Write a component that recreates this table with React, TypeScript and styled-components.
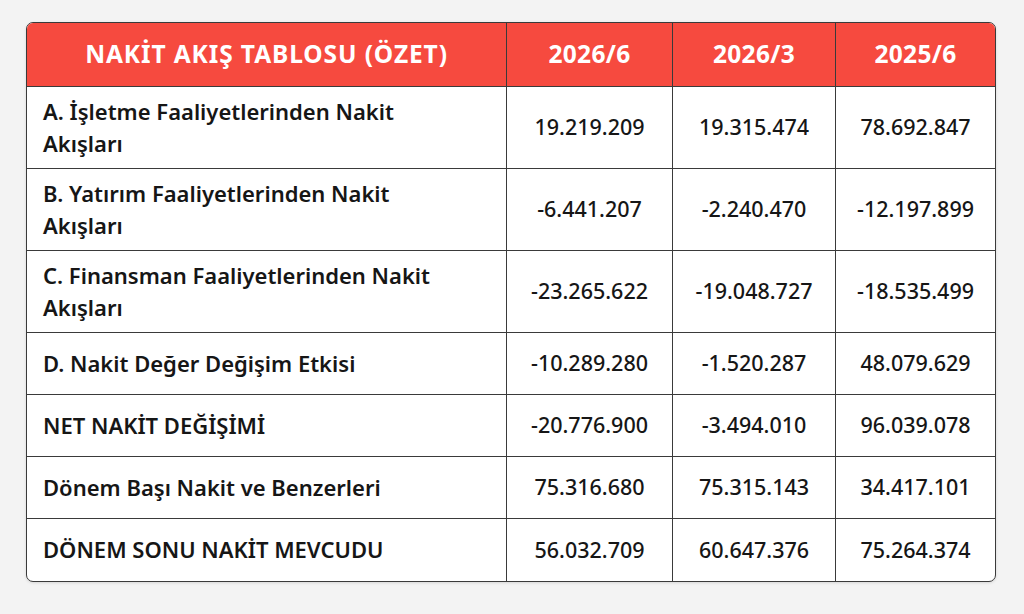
import React from 'react'
import styled, { createGlobalStyle } from 'styled-components'

const GlobalStyle = createGlobalStyle`
    html, body {
        margin: 0;
        padding: 0;
        background: #f3f3f3;
        font-family: 'Noto Sans', 'Open Sans', sans-serif;
    }
`

const Page = styled.div({
    padding: '22px 0 0 26px',
    height: '614px',
    boxSizing: 'border-box',
})

const Table = styled.table`
    width: 970px;
    border-collapse: separate;
    border-spacing: 0;
    border: 1px solid #3a3a3a;
    border-radius: 7px;
    overflow: hidden;
    background: #ffffff;
    table-layout: fixed;
    box-shadow: 0 1px 3px rgba(0, 0, 0, 0.12);
`

const HeadCell = styled.th<{ first?: boolean }>`
    height: 61px;
    padding: 0 0 2px 0;
    background: #f64a3f;
    color: #ffffff;
    font-size: 24.5px;
    font-weight: 700;
    text-align: center;
    letter-spacing: ${(p) => (p.first ? '0.9px' : '0.3px')};
    border-left: ${(p) => (p.first ? 'none' : '1px solid #3a3a3a')};
    border-bottom: 1px solid #3a3a3a;
`

const Row = styled.tr<{ tall?: boolean }>`
    height: ${(p) => (p.tall ? '82px' : '62px')};
`

const LabelCell = styled.td<{ last?: boolean }>`
    padding: 0 60px 2px 16px;
    font-size: 22px;
    font-weight: 600;
    line-height: 32px;
    color: #161616;
    border-bottom: ${(p) => (p.last ? 'none' : '1px solid #3a3a3a')};
`

const ValueCell = styled.td<{ last?: boolean }>`
    padding: 0 0 2px 0;
    text-align: center;
    font-size: 21.5px;
    font-weight: 500;
    color: #161616;
    border-left: 1px solid #3a3a3a;
    border-bottom: ${(p) => (p.last ? 'none' : '1px solid #3a3a3a')};
`

const rows = [
    { label: 'A. İşletme Faaliyetlerinden Nakit Akışları', values: ['19.219.209', '19.315.474', '78.692.847'], tall: true },
    { label: 'B. Yatırım Faaliyetlerinden Nakit Akışları', values: ['-6.441.207', '-2.240.470', '-12.197.899'], tall: true },
    { label: 'C. Finansman Faaliyetlerinden Nakit Akışları', values: ['-23.265.622', '-19.048.727', '-18.535.499'], tall: true },
    { label: 'D. Nakit Değer Değişim Etkisi', values: ['-10.289.280', '-1.520.287', '48.079.629'] },
    { label: 'NET NAKİT DEĞİŞİMİ', values: ['-20.776.900', '-3.494.010', '96.039.078'] },
    { label: 'Dönem Başı Nakit ve Benzerleri', values: ['75.316.680', '75.315.143', '34.417.101'] },
    { label: 'DÖNEM SONU NAKİT MEVCUDU', values: ['56.032.709', '60.647.376', '75.264.374'] },
]

export default function App() {
    return (
        <Page>
            <GlobalStyle />
            <Table>
                <colgroup>
                    <col style={{ width: 479 }} />
                    <col style={{ width: 166 }} />
                    <col style={{ width: 163 }} />
                    <col />
                </colgroup>
                <thead>
                    <tr>
                        <HeadCell first>NAKİT AKIŞ TABLOSU (ÖZET)</HeadCell>
                        <HeadCell>2026/6</HeadCell>
                        <HeadCell>2026/3</HeadCell>
                        <HeadCell>2025/6</HeadCell>
                    </tr>
                </thead>
                <tbody>
                    {rows.map((r, i) => {
                        const last = i === rows.length - 1
                        return (
                            <Row key={r.label} tall={r.tall}>
                                <LabelCell last={last}>{r.label}</LabelCell>
                                {r.values.map((v, j) => (
                                    <ValueCell key={j} last={last}>
                                        {v}
                                    </ValueCell>
                                ))}
                            </Row>
                        )
                    })}
                </tbody>
            </Table>
        </Page>
    )
}
